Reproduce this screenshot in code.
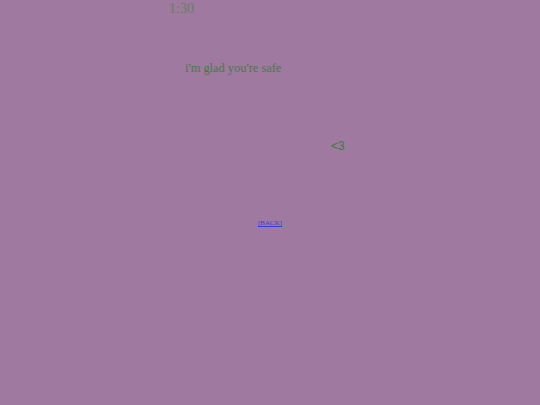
export default function App() {
  return (
    <div className="min-h-[405px] w-[540px] bg-[#9f799f] font-['Liberation_Serif',serif]">
      {/* time */}
      <div className="pl-[169px] pt-[1px] text-[14px] leading-[16px] text-[#5f8160]">1:30</div>

      {/* message */}
      <div className="pl-[185px] pt-[43px] text-[12.4px] leading-[16px] text-[#3f7f3f]">
        i'm glad you're safe
      </div>

      {/* heart */}
      <div className="pl-[331px] pt-[62px] font-['Liberation_Sans',sans-serif] text-[12px] leading-[16px] text-[#3a7d3a]">
        &lt;3
      </div>

      {/* back link */}
      <div className="pl-[258px] pt-[64px] text-[7px] leading-[10px]">
        <a href="#" className="text-[#3b3bd0] underline">[BACK]</a>
      </div>
    </div>
  );
}
